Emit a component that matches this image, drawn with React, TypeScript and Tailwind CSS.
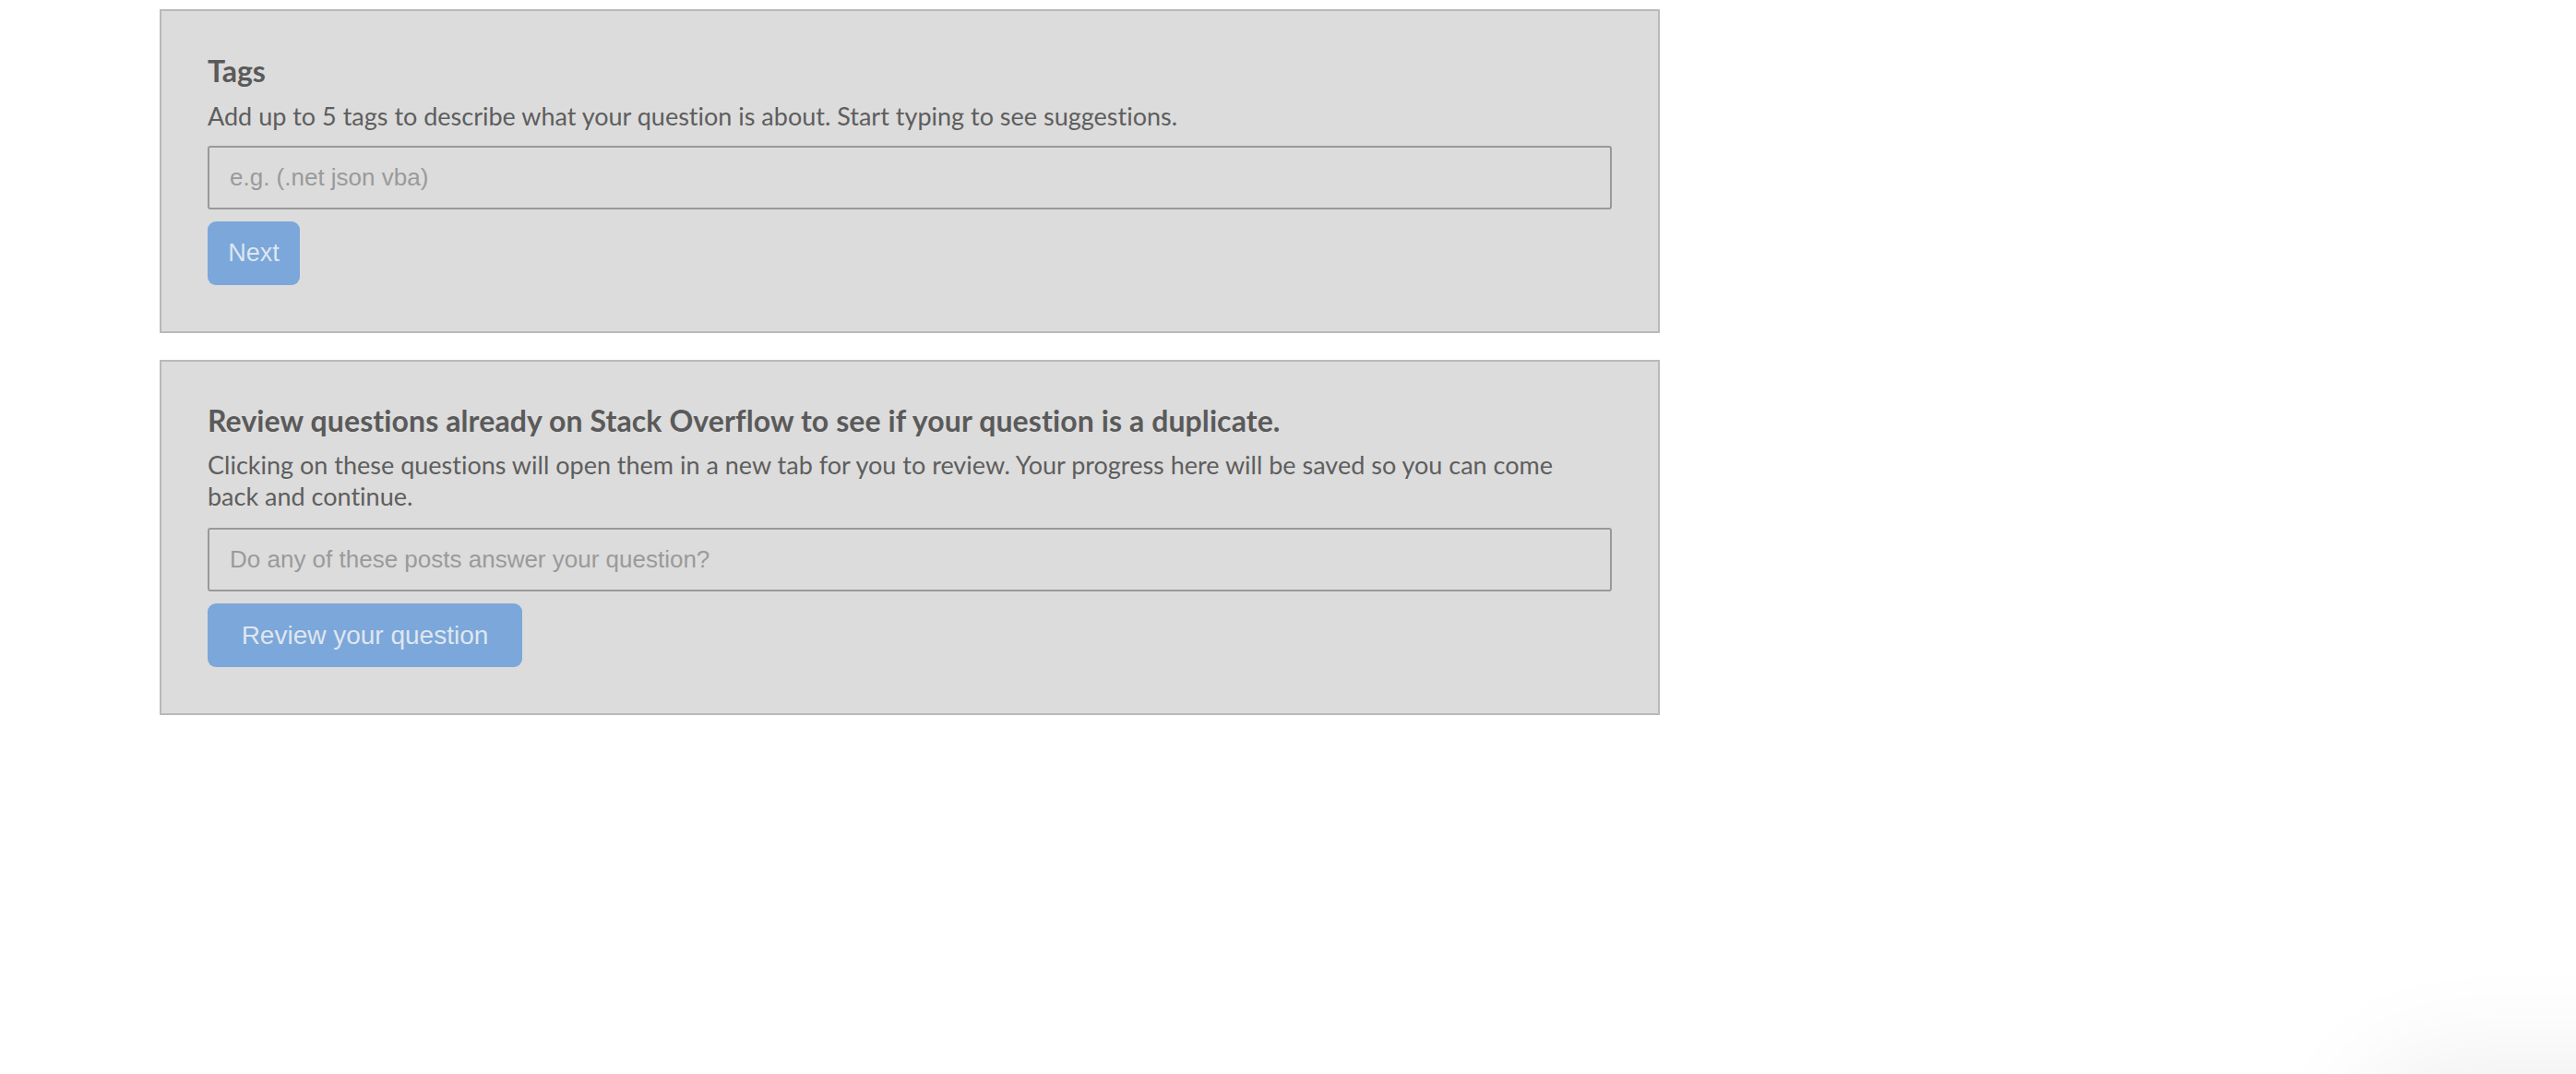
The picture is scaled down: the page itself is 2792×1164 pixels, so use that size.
import React from 'react'

const bodyFont = { fontFamily: 'Lato, "Noto Sans", sans-serif' }
const fieldFont = { fontFamily: '"Liberation Sans", Arial, sans-serif' }

const Panel = ({ children, className = '' }: { children: React.ReactNode; className?: string }) => (
  <section className={`border-2 border-[#b9b9b9] bg-[#dcdcdc] pl-[50px] pr-[50px] pb-[50px] ${className}`}>
    {children}
  </section>
)

const TextField = ({ placeholder }: { placeholder: string }) => (
  <input
    type="text"
    placeholder={placeholder}
    style={fieldFont}
    className="block w-full h-[69px] rounded-[3px] border-2 border-[#999999] bg-[#dcdcdc] px-[22px] text-[26px] text-[#555] placeholder:text-[#9a9a9a] outline-none"
  />
)

export default function App() {
  return (
    <div className="relative min-h-screen overflow-hidden bg-white [font-variant-ligatures:none]" style={bodyFont}>
      <div className="flex w-[1799px] flex-col gap-[29px] pl-[173px] pt-[10px]">
        <Panel className="pt-[45px]">
          <h2 className="text-[32px] font-bold leading-[40px] text-[#5a5a5a]">Tags</h2>
          <p className="mt-[12px] text-[27px] leading-[34px] text-[#5e5e5e]">
            Add up to 5 tags to describe what your question is about. Start typing to see suggestions.
          </p>
          <div className="mt-[15px]">
            <TextField placeholder="e.g. (.net json vba)" />
          </div>
          <button
            style={fieldFont}
            className="mt-[13px] flex h-[69px] w-[100px] items-center justify-center rounded-[9px] bg-[#7ba7da] text-[27px] text-[#dfe6ef]"
          >
            Next
          </button>
        </Panel>

        <Panel className="pt-[44px]">
          <h2 className="text-[32px] font-bold leading-[40px] tracking-[0.1px] text-[#5a5a5a]">
            Review questions already on Stack Overflow to see if your question is a duplicate.
          </h2>
          <p className="mt-[11px] pr-[40px] text-[27px] leading-[34px] text-[#5e5e5e]">
            Clicking on these questions will open them in a new tab for you to review. Your progress here will be saved so you can come back and continue.
          </p>
          <div className="mt-[17px]">
            <TextField placeholder="Do any of these posts answer your question?" />
          </div>
          <button
            style={fieldFont}
            className="mt-[13px] flex h-[69px] w-[341px] items-center justify-center rounded-[9px] bg-[#7ba7da] text-[28px] text-[#dfe6ef]"
          >
            Review your question
          </button>
        </Panel>
      </div>

      {/* soft shadow of a widget sitting just below the fold */}
      <div className="pointer-events-none absolute left-[2600px] top-[1190px] h-[300px] w-[400px] rounded-[40px] bg-white shadow-[0_0_120px_40px_rgba(0,0,0,0.07)]" />
    </div>
  )
}
